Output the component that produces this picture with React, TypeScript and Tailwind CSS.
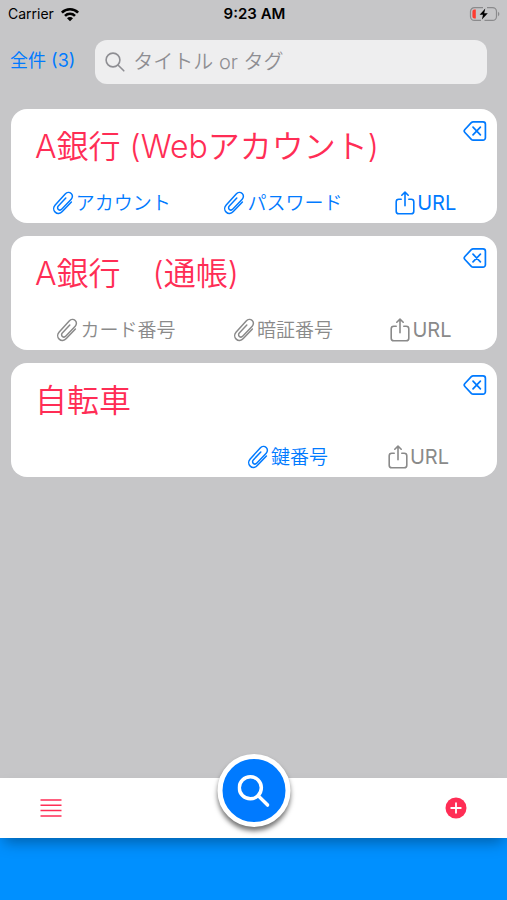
import React from 'react'

type Action = { label: string; kind: 'clip' | 'share'; active: boolean }

interface Entry {
  title: string
  actions: (Action | null)[]
}

const entries: Entry[] = [
  {
    title: 'A銀行 (Webアカウント)',
    actions: [
      { label: 'アカウント', kind: 'clip', active: true },
      { label: 'パスワード', kind: 'clip', active: true },
      { label: 'URL', kind: 'share', active: true }
    ]
  },
  {
    title: 'A銀行　(通帳)',
    actions: [
      { label: 'カード番号', kind: 'clip', active: false },
      { label: '暗証番号', kind: 'clip', active: false },
      { label: 'URL', kind: 'share', active: false }
    ]
  },
  {
    title: '自転車',
    actions: [
      null,
      { label: '鍵番号', kind: 'clip', active: true },
      { label: 'URL', kind: 'share', active: false }
    ]
  }
]

const WifiIcon = () => (
  <svg viewBox="0 0 20 15" className="h-[15px] w-5" fill="none" stroke="currentColor" strokeWidth="2.6">
    <path d="M1.9 5.6 A11.4 11.4 0 0 1 18.1 5.6" />
    <path d="M5 8.9 A7 7 0 0 1 15 8.9" />
    <path d="M10 14.2 L7 11.2 A4.2 4.2 0 0 1 13 11.2 Z" fill="currentColor" stroke="none" />
  </svg>
)

const BatteryIcon = () => (
  <svg viewBox="0 0 32 16" className="h-4 w-8" fill="none">
    <path d="M14 1.6 H5.5 A4 4 0 0 0 1.5 5.6 V10.4 A4 4 0 0 0 5.5 14.4 H12" stroke="#8a8a8c" strokeWidth="1.2" />
    <path d="M18 1.6 H23.5 A4 4 0 0 1 27.5 5.6 V10.4 A4 4 0 0 1 23.5 14.4 H15.5" stroke="#8a8a8c" strokeWidth="1.2" />
    <path d="M29 5.7 A2.6 2.6 0 0 1 29 10.3 Z" fill="#8a8a8c" />
    <path d="M6.8 3.4 V12.6 H5.4 A2 2 0 0 1 3.4 10.6 V5.4 A2 2 0 0 1 5.4 3.4 Z" fill="#ff3b30" />
    <path d="M16.3 2.6 L10.6 8.8 H14 L12.9 13.6 L18.8 7.2 H15.2 Z" fill="#000" />
  </svg>
)

const MagnifierIcon = ({ className }: { className: string }) => (
  <svg viewBox="0 0 20 20" className={className} fill="none" stroke="currentColor" strokeLinecap="round">
    <circle cx="8" cy="8" r="6.9" />
    <path d="M13.2 13.2 L18.8 18.8" />
  </svg>
)

const ClipIcon = () => (
  <svg viewBox="0 0 22 24" className="h-6 w-[22px]" fill="none" stroke="currentColor" strokeWidth="1.5" strokeLinecap="round" strokeLinejoin="round">
    <path d="M19.4 11 L10.3 20.6 C8.2 22.8 5.2 23 3.2 21.1 C1.2 19.2 1.2 16.1 3.2 13.9 L13.2 3 C14.9 1.2 17.6 1 19.2 2.5 C20.8 4 20.8 6.6 19.2 8.3 L9.9 18.1 C8.9 19.2 7.3 19.3 6.3 18.4 C5.3 17.5 5.4 15.9 6.3 14.9 L13.8 7" />
  </svg>
)

const ShareIcon = () => (
  <svg viewBox="0 0 20 24" className="h-6 w-5" fill="none" stroke="currentColor" strokeWidth="1.6" strokeLinecap="round" strokeLinejoin="round">
    <path d="M6.2 8.2 H3.8 A2.6 2.6 0 0 0 1.2 10.8 V20.2 A2.6 2.6 0 0 0 3.8 22.8 H16.2 A2.6 2.6 0 0 0 18.8 20.2 V10.8 A2.6 2.6 0 0 0 16.2 8.2 H13.8" />
    <path d="M10 14.8 V1.2 M6.8 4.2 L10 1.1 L13.2 4.2" />
  </svg>
)

const DeleteIcon = () => (
  <svg viewBox="0 0 24 22" className="h-[22px] w-6" fill="none" stroke="currentColor" strokeWidth="1.7" strokeLinecap="round" strokeLinejoin="round">
    <path d="M10.2 1.8 H20 A2.4 2.4 0 0 1 22.4 4.2 V17.8 A2.4 2.4 0 0 1 20 20.2 H10.2 A2.6 2.6 0 0 1 8.3 19.4 L1.9 12.5 A2.2 2.2 0 0 1 1.9 9.5 L8.3 2.6 A2.6 2.6 0 0 1 10.2 1.8 Z" />
    <path d="M10 7.2 L17.4 14.8 M17.4 7.2 L10 14.8" />
  </svg>
)

const ActionButton = ({ label, kind, active }: Action) => (
  <button
    className={`flex h-7 items-center gap-0.5 leading-7 ${active ? 'text-[#007aff]' : 'text-[#8a8a8a]'}`}
  >
    {kind === 'clip' ? <ClipIcon /> : <ShareIcon />}
    <span className={kind === 'share' ? 'text-xl leading-7' : 'pt-0.5 text-[19px] leading-7 font-[350]'}>{label}</span>
  </button>
)

const EntryCard = ({ title, actions }: Entry) => (
  <li className="rounded-2xl bg-white pb-1.5">
    <div className="flex items-start justify-between pt-[11px] pl-6 pr-2.5">
      <h2 className="pt-[3px] text-[32px] leading-12 font-[350] text-[#ff2d55]">{title}</h2>
      <button aria-label="削除" className="text-[#007aff]">
        <DeleteIcon />
      </button>
    </div>
    <div className="mt-[18px] flex justify-evenly gap-3">
      {actions.map((action, i) =>
        action ? <ActionButton key={i} {...action} /> : <span key={i} className="w-32" />
      )}
    </div>
  </li>
)

export default function App() {
  return (
    <div className="flex min-h-screen flex-col bg-[#c6c6c8] font-['Inter','Noto_Sans_CJK_JP',sans-serif]">
      <div className="grid h-7 grid-cols-3 items-center pl-2 pr-1.5 text-sm text-black">
        <div className="flex items-center gap-1.5">
          <span>Carrier</span>
          <WifiIcon />
        </div>
        <span className="text-center text-[15px] font-semibold">9:23 AM</span>
        <div className="flex justify-end">
          <BatteryIcon />
        </div>
      </div>

      <header className="flex items-center gap-5 pt-3 pl-2.5 pr-5">
        <button className="shrink-0 pb-0.5 text-lg text-[#007aff]">全件 (3)</button>
        <label className="flex h-11 flex-1 items-center gap-2 rounded-xl bg-[#eeeeef] px-2.5 text-[#8e8e93]">
          <MagnifierIcon className="size-5 shrink-0 stroke-[1.6]" />
          <input
            type="search"
            aria-label="検索"
            placeholder="タイトル or タグ"
            className="w-full min-w-0 bg-transparent text-xl font-[350] text-black outline-none placeholder:text-[#8e8e93]"
          />
        </label>
      </header>

      <main className="flex-1 pt-[25px] pr-2.5 pl-[11px]">
        <ul className="flex flex-col gap-[13px]">
          {entries.map((entry) => (
            <EntryCard key={entry.title} {...entry} />
          ))}
        </ul>
      </main>

      <footer className="bg-[#0090ff] pb-[62px]">
        <nav className="relative flex h-[60px] items-center justify-between bg-white px-10 text-[#ff2d55] shadow-[0_8px_14px_-4px_rgba(0,0,0,0.35)]">
          <button aria-label="一覧">
            <svg viewBox="0 0 22 20" className="h-5 w-[22px]" stroke="currentColor" strokeWidth="1.5">
              <path d="M0.5 2 H21.5 M0.5 7.3 H21.5 M0.5 12.6 H21.5 M0.5 17.9 H21.5" />
            </svg>
          </button>
          <button
            aria-label="検索"
            className="absolute -top-6 left-1/2 flex size-[73px] -translate-x-1/2 items-center justify-center rounded-full border-[5px] border-white bg-[#007aff] text-white shadow-[0_4px_5px_rgba(0,0,0,0.55)]"
          >
            <MagnifierIcon className="size-8 stroke-[2.2]" />
          </button>
          <button aria-label="追加">
            <svg viewBox="0 0 22 22" className="size-[22px]">
              <circle cx="11" cy="11" r="10.5" fill="currentColor" />
              <path d="M11 6.2 V15.8 M6.2 11 H15.8" stroke="#fff" strokeWidth="1.8" strokeLinecap="round" />
            </svg>
          </button>
        </nav>
      </footer>
    </div>
  )
}
